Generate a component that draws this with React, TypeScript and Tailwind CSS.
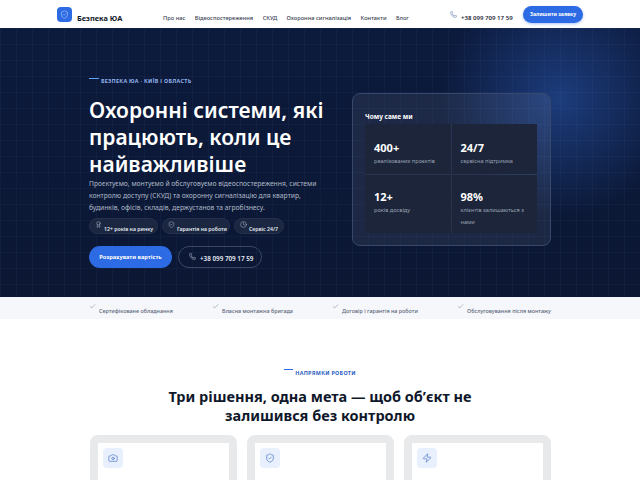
import { Phone, ShieldCheck, Camera, Zap, Check, Award, Clock } from "lucide-react";

const nav = ["Про нас", "Відеоспостереження", "СКУД", "Охоронна сигналізація", "Контакти", "Блог"];
const stats = [
  ["400+", "реалізованих проєктів"],
  ["24/7", "сервісна підтримка"],
  ["12+", "років досвіду"],
  ["98%", "клієнтів залишаються з нами"],
];
const strip = ["Сертифіковане обладнання", "Власна монтажна бригада", "Договір і гарантія на роботи", "Обслуговування після монтажу"];
const cards = [Camera, ShieldCheck, Zap];

export default function App() {
  return (
    <div className="h-[480px] w-[640px] overflow-hidden bg-white font-['Noto_Sans',sans-serif]">
      <header className="flex h-[28px] items-start whitespace-nowrap bg-white pl-[57px]">
        <div className="mt-[7px] flex h-[15px] w-[15px] shrink-0 items-center justify-center rounded-[4px] bg-[#2d6be4] text-[#bcd4fb]">
          <ShieldCheck size={9} strokeWidth={1.5} />
        </div>
        <span className="ml-[5px] mt-[13px] w-[46px] text-[7.4px] font-bold leading-[10px] text-[#111827]">Безпека ЮА</span>
        <nav className="ml-[40px] mt-[13px] flex w-[246px] justify-between text-[5.7px] font-medium leading-[10px] text-[#374151]">
          {nav.map((n) => <span key={n}>{n}</span>)}
        </nav>
        <Phone size={7} strokeWidth={1.5} className="ml-[41px] mt-[11px] shrink-0 text-[#3f5f9e]" />
        <span className="ml-[4px] mt-[13px] w-[53px] text-[6.1px] font-semibold leading-[10px] text-[#1f2937]">+38 099 709 17 59</span>
        <button className="ml-[9px] mt-[6px] h-[17px] w-[60px] shrink-0 rounded-full bg-[#2d6be4] pt-[1px] text-[5.1px] font-bold text-white shadow-[0_1px_3px_rgba(45,107,228,0.4)]">Залишити заявку</button>
      </header>

      <section
        className="relative flex h-[269px] bg-[#0c1a3a] pl-[89px]"
        style={{
          backgroundImage:
            "linear-gradient(rgba(120,150,220,0.05) 1px, transparent 1px), linear-gradient(90deg, rgba(120,150,220,0.05) 1px, transparent 1px), radial-gradient(circle 120px at 560px 70px, rgba(45,95,190,0.5), transparent 100%), linear-gradient(180deg,#0c1a3c,#0b1733)",
          backgroundSize: "16px 16px, 16px 16px, auto, auto",
        }}
      >
        <div className="w-[240px] shrink-0 pt-[49px]">
          <div className="flex h-[9px] items-start">
            <span className="mt-[1px] h-[1px] w-[10px] bg-[#60a5fa]" />
            <span className="ml-[2px] whitespace-nowrap text-[5.4px] font-bold leading-[8px] tracking-[0.3px] text-[#93b4ee]">БЕЗПЕКА ЮА · КИЇВ І ОБЛАСТЬ</span>
          </div>
          <h1 className="mt-[11px] text-[21px] font-semibold leading-[27px] text-white">Охоронні системи, які працюють, коли це найважливіше</h1>
          <p className="w-[235px] text-[6.75px] leading-[12px] text-[#b0bac9]">Проєктуємо, монтуємо й обслуговуємо відеоспостереження, системи контролю доступу (СКУД) та охоронну сигналізацію для квартир, будинків, офісів, складів, держустанов та агробізнесу.</p>
          <div className="mt-[4px] flex gap-[4px]">
            {([[Award, "12+ років на ринку", 69], [ShieldCheck, "Гарантія на роботи", 68], [Clock, "Сервіс 24/7", 50]] as const).map(([I, t, w]) => (
              <div key={t} className="flex h-[16px] items-start rounded-full border border-[#25304d] bg-[#1b2741] pl-[5px] text-[5.2px] font-semibold leading-[8px] text-[#e2e8f0]" style={{ width: w }}>
                <I size={7} strokeWidth={1.5} className="mt-[2px] shrink-0 text-[#c6d0e0]" />
                <span className="ml-[2px] mt-[6px] whitespace-nowrap">{t}</span>
              </div>
            ))}
          </div>
          <div className="mt-[12px] flex gap-[6px]">
            <button className="h-[22px] w-[83px] rounded-full bg-[#2d6be4] pt-[1px] text-[5.7px] font-bold text-white">Розрахувати вартість</button>
            <div className="flex h-[22px] w-[84px] items-start rounded-full border border-[#3a4663] pl-[10px]">
              <Phone size={7} strokeWidth={1.5} className="mt-[6px] shrink-0 text-[#dbe3ef]" />
              <span className="ml-[4px] mt-[7px] whitespace-nowrap text-[6.3px] font-semibold leading-[10px] text-[#e8edf5]">+38 099 709 17 59</span>
            </div>
          </div>
        </div>

        <div className="ml-[23px] mt-[65px] h-[153px] w-[199px] rounded-[8px] border border-[#38486b] bg-[rgba(255,255,255,0.07)] pl-[12px] pr-[13px] pt-[18px]">
          <div className="text-[6.5px] font-bold leading-[10px] text-white">Чому саме ми</div>
          <div className="mt-[2px] grid h-[109px] grid-cols-2 grid-rows-[50px_58px] gap-px rounded-[4px] bg-[rgba(255,255,255,0.05)]">
            {stats.map(([v, l], i) => (
              <div key={v} className={`bg-[#1c2539] pl-[9px] ${i < 2 ? "pt-[17px]" : "pt-[15px]"}`}>
                <div className="text-[11px] font-bold leading-[14px] text-white">{v}</div>
                <div className="w-[70px] text-[5.6px] leading-[12px] text-[#98a2b3]">{l}</div>
              </div>
            ))}
          </div>
        </div>
      </section>

      <div className="flex h-[22px] w-[640px] items-start justify-between bg-[#f5f7fb] pl-[89px] pr-[89px] pt-[7px]">
        {strip.map((s) => (
          <div key={s} className="flex items-start">
            <Check size={7} strokeWidth={1.5} className="-mt-[1px] shrink-0 text-[#5b6b85]" />
            <span className="ml-[3px] mt-[3px] whitespace-nowrap text-[5.4px] font-medium leading-[8px] text-[#5a6478]">{s}</span>
          </div>
        ))}
      </div>

      <div className="flex flex-col items-center bg-white pt-[49px]">
        <div className="flex items-start">
          <span className="mt-[1px] h-[1px] w-[9px] bg-[#2d6be4]" />
          <span className="ml-[2px] mt-[1px] whitespace-nowrap text-[5.4px] font-bold leading-[8px] tracking-[0.3px] text-[#2d5fc4]">НАПРЯМКИ РОБОТИ</span>
        </div>
        <h2 className="mt-[10px] w-[340px] text-center text-[14.5px] font-bold leading-[19px] text-[#0f172a]">Три рішення, одна мета — щоб об’єкт не залишився без контролю</h2>
        <div className="mt-[10px] flex gap-[10px]">
          {cards.map((I, i) => (
            <div key={i} className="h-[60px] w-[147px] rounded-[8px] border-[8px] border-[#e8e9eb] bg-white pl-[5px] pt-[5px]">
              <div className="flex h-[20px] w-[20px] items-center justify-center rounded-[4px] bg-[#e8f0fd] text-[#3b68c4]">
                <I size={10} strokeWidth={1.5} />
              </div>
            </div>
          ))}
        </div>
      </div>
    </div>
  );
}
